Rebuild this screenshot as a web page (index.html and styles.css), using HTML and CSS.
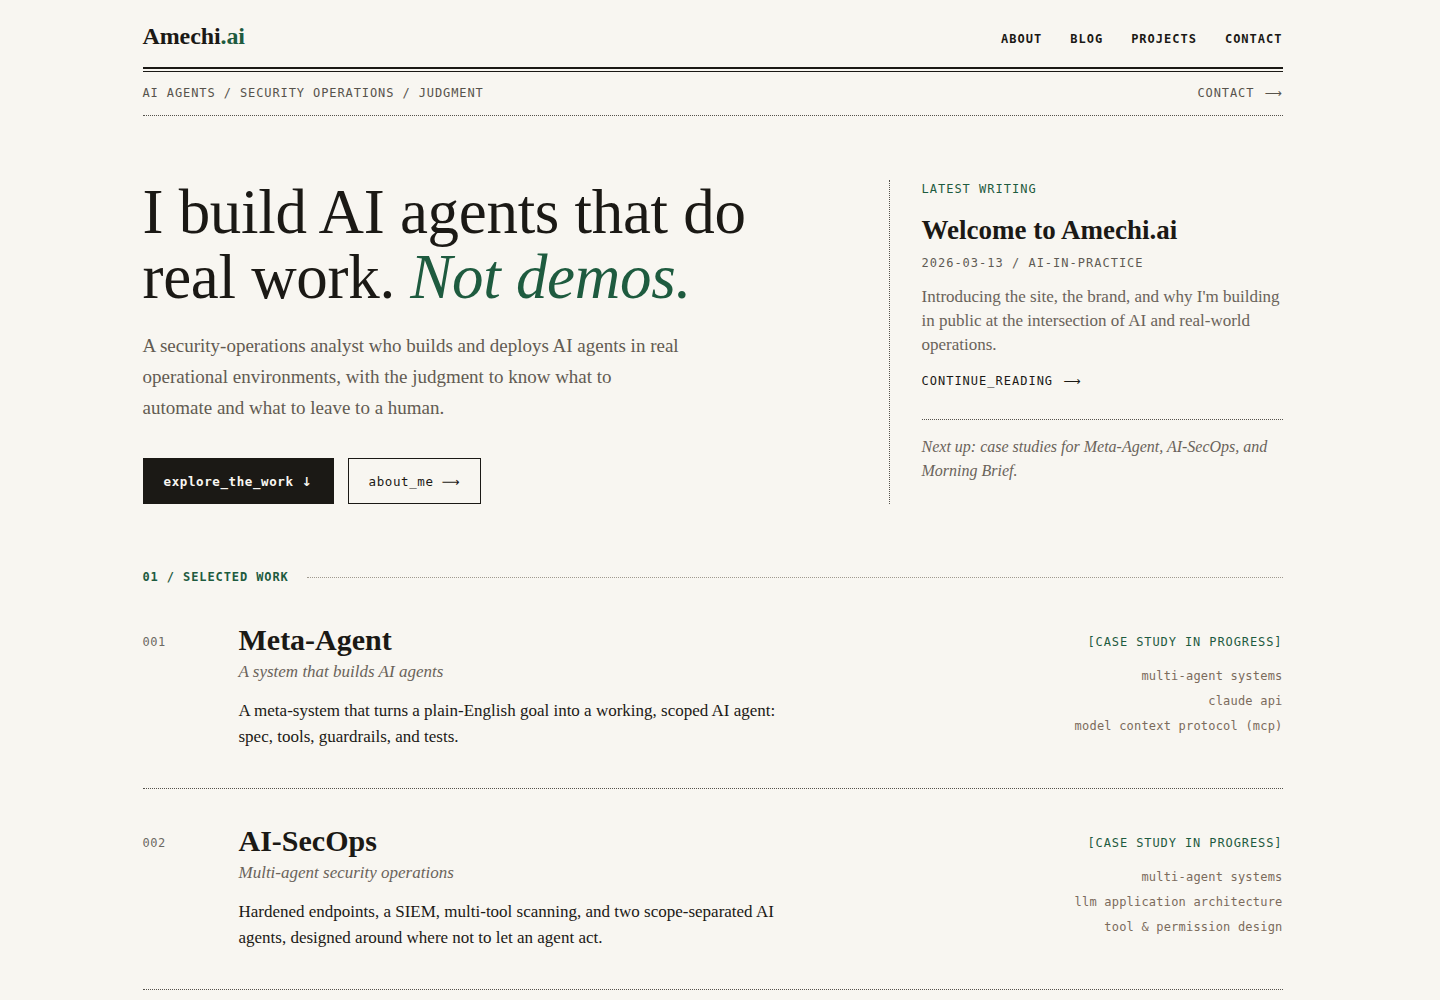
FILE: index.html
```html
<!DOCTYPE html>
<html lang="en">
<head>
<meta charset="utf-8">
<title>Amechi.ai</title>
<link rel="stylesheet" href="styles.css">
</head>
<body>
<div class="page">
  <header class="masthead">
    <a class="logo" href="#">Amechi<span class="logo-ai">.ai</span></a>
    <nav class="nav">
      <a href="#">ABOUT</a>
      <a href="#">BLOG</a>
      <a href="#">PROJECTS</a>
      <a href="#">CONTACT</a>
    </nav>
  </header>
  <div class="rule-double"></div>
  <div class="subbar">
    <span class="crumbs">AI AGENTS / SECURITY OPERATIONS / JUDGMENT</span>
    <a class="subbar-link" href="#">CONTACT <span class="arrow">&#10230;</span></a>
  </div>

  <section class="hero">
    <div class="hero-main">
      <h1 class="hero-title">I build AI agents that do real work. <em class="accent">Not demos.</em></h1>
      <p class="hero-lede">A security-operations analyst who builds and deploys AI agents in real operational environments, with the judgment to know what to automate and what to leave to a human.</p>
      <div class="hero-actions">
        <a class="btn btn-dark" href="#">explore_the_work <span class="btn-arrow">&darr;</span></a>
        <a class="btn btn-outline" href="#">about_me <span class="btn-arrow">&#10230;</span></a>
      </div>
    </div>
    <aside class="hero-side">
      <div class="eyebrow">LATEST WRITING</div>
      <h2 class="post-title">Welcome to Amechi.ai</h2>
      <div class="post-meta">2026-03-13 / AI-IN-PRACTICE</div>
      <p class="post-excerpt">Introducing the site, the brand, and why I'm building in public at the intersection of AI and real-world operations.</p>
      <a class="post-link" href="#">CONTINUE_READING <span class="arrow">&#10230;</span></a>
      <p class="post-next">Next up: case studies for Meta-Agent, AI-SecOps, and Morning Brief.</p>
    </aside>
  </section>

  <section class="work">
    <div class="section-head">
      <span class="section-label">01 / SELECTED WORK</span>
      <span class="section-line"></span>
    </div>

    <article class="project">
      <div class="project-num">001</div>
      <div class="project-body">
        <h3 class="project-title">Meta-Agent</h3>
        <p class="project-sub">A system that builds AI agents</p>
        <p class="project-desc">A meta-system that turns a plain-English goal into a working, scoped AI agent: spec, tools, guardrails, and tests.</p>
      </div>
      <div class="project-meta">
        <div class="status">[CASE STUDY IN PROGRESS]</div>
        <ul class="tags">
          <li>multi-agent systems</li>
          <li>claude api</li>
          <li>model context protocol (mcp)</li>
        </ul>
      </div>
    </article>

    <article class="project">
      <div class="project-num">002</div>
      <div class="project-body">
        <h3 class="project-title">AI-SecOps</h3>
        <p class="project-sub">Multi-agent security operations</p>
        <p class="project-desc">Hardened endpoints, a SIEM, multi-tool scanning, and two scope-separated AI agents, designed around where not to let an agent act.</p>
      </div>
      <div class="project-meta">
        <div class="status">[CASE STUDY IN PROGRESS]</div>
        <ul class="tags">
          <li>multi-agent systems</li>
          <li>llm application architecture</li>
          <li>tool &amp; permission design</li>
        </ul>
      </div>
    </article>

    <article class="project">
      <div class="project-num">003</div>
      <div class="project-body">
        <h3 class="project-title">Morning Brief</h3>
        <p class="project-sub">A daily intelligence digest</p>
        <p class="project-desc">An agent that gathers, filters, and summarizes the signals that matter each morning, with a human deciding what happens next.</p>
      </div>
      <div class="project-meta">
        <div class="status">[CASE STUDY IN PROGRESS]</div>
        <ul class="tags">
          <li>agent orchestration</li>
          <li>summarization</li>
          <li>scheduled workflows</li>
        </ul>
      </div>
    </article>
  </section>

  <section class="about">
    <div class="section-head">
      <span class="section-label">02 / APPROACH</span>
      <span class="section-line"></span>
    </div>
    <div class="about-grid">
      <div class="about-item">
        <div class="about-num">A</div>
        <h3 class="about-title">Scope before autonomy</h3>
        <p class="about-text">Every agent starts with a clear boundary: what it may touch, what it may not, and who reviews its work.</p>
      </div>
      <div class="about-item">
        <div class="about-num">B</div>
        <h3 class="about-title">Operations first</h3>
        <p class="about-text">Built and tested in real environments, where failure modes are concrete and the cost of a mistake is known.</p>
      </div>
      <div class="about-item">
        <div class="about-num">C</div>
        <h3 class="about-title">Humans in the loop</h3>
        <p class="about-text">Judgment about what to automate matters more than the automation itself.</p>
      </div>
    </div>
  </section>

  <footer class="footer">
    <span class="footer-brand">Amechi<span class="logo-ai">.ai</span></span>
    <span class="footer-note">&copy; 2026 / BUILT IN PUBLIC</span>
  </footer>
</div>
</body>
</html>
```

FILE: styles.css
```css
* { box-sizing: border-box; }

html, body {
  margin: 0;
  padding: 0;
  background: #f8f6f1;
  color: #1b1915;
}

body {
  font-family: "Liberation Serif", "DejaVu Serif", serif;
  padding-right: 15px;
}

a { color: inherit; text-decoration: none; }

.page {
  width: 1140px;
  margin: 0 auto;
}

/* masthead */
.masthead {
  display: flex;
  justify-content: space-between;
  align-items: flex-end;
  height: 67px;
  padding-bottom: 21px;
}

.logo {
  font-family: "Liberation Serif", serif;
  font-weight: 700;
  font-size: 24px;
  letter-spacing: -0.1px;
  line-height: 1;
  color: #1b1915;
  margin-bottom: -2px;
}

.logo-ai { color: #1e5b3f; }

.nav {
  display: flex;
  gap: 28px;
  font-family: "DejaVu Sans Mono", monospace;
  font-size: 12px;
  letter-spacing: 1px;
  font-weight: 700;
  line-height: 1;
  margin-bottom: 1px;
}

.nav a { color: #1b1915; }

.rule-double {
  height: 5px;
  border-top: 2px solid #1b1915;
  border-bottom: 1.5px solid #1b1915;
}

.subbar {
  display: flex;
  justify-content: space-between;
  align-items: center;
  height: 44px;
  border-bottom: 1px dotted #55524c;
  font-family: "DejaVu Sans Mono", monospace;
  font-size: 12px;
  letter-spacing: 0.9px;
  color: #57534c;
  padding-bottom: 2px;
}

.subbar-link { color: #57534c; }

.arrow {
  font-family: "DejaVu Sans", sans-serif;
  margin-left: 2px;
}

/* hero */
.hero {
  display: grid;
  grid-template-columns: 1fr 394px;
  margin-top: 64px;
}

.hero-main {
  padding-right: 60px;
}

.hero-title {
  font-family: "Liberation Serif", serif;
  font-weight: 400;
  font-size: 63px;
  line-height: 65px;
  letter-spacing: -0.3px;
  margin: 0;
  max-width: 660px;
  color: #1b1915;
}

.accent {
  color: #1e5b3f;
  font-style: italic;
}

.hero-lede {
  margin: 20px 0 0;
  width: 539px;
  font-size: 19px;
  line-height: 31px;
  color: #625b52;
}

.hero-actions {
  display: flex;
  gap: 14px;
  margin-top: 35px;
}

.btn {
  display: inline-flex;
  align-items: center;
  height: 46px;
  padding: 0 20px;
  font-family: "DejaVu Sans Mono", monospace;
  font-size: 12.5px;
  letter-spacing: 0.6px;
  border: 1px solid #1b1915;
}

.btn-dark {
  background: #1b1915;
  color: #f8f6f1;
  font-weight: 700;
}

.btn-outline {
  background: transparent;
  color: #1b1915;
}

.btn-arrow {
  font-family: "DejaVu Sans", sans-serif;
  margin-left: 8px;
}

.hero-side {
  border-left: 1px dotted #55524c;
  padding-left: 32px;
  padding-bottom: 20px;
}

.eyebrow {
  font-family: "DejaVu Sans Mono", monospace;
  font-size: 12px;
  letter-spacing: 1px;
  color: #1e5b3f;
  margin-top: 2px;
}

.post-title {
  font-family: "Liberation Serif", serif;
  font-weight: 700;
  font-size: 27px;
  line-height: 32px;
  margin: 18px 0 0;
  color: #1b1915;
}

.post-meta {
  font-family: "DejaVu Sans Mono", monospace;
  font-size: 12px;
  letter-spacing: 1px;
  color: #5f5b54;
  margin-top: 10px;
}

.post-excerpt {
  margin: 15px 0 0;
  font-size: 17px;
  line-height: 24px;
  color: #6a635a;
}

.post-link {
  display: block;
  font-family: "DejaVu Sans Mono", monospace;
  font-size: 12px;
  letter-spacing: 1px;
  color: #1b1915;
  margin-top: 17px;
  padding-bottom: 31px;
  border-bottom: 1px dotted #55524c;
}

.post-next {
  margin: 15px 0 0;
  font-style: italic;
  font-size: 16px;
  line-height: 24px;
  color: #6a635a;
}

/* work */
.work { margin-top: 66px; }

.section-head {
  display: flex;
  align-items: center;
  gap: 18px;
}

.section-label {
  font-family: "DejaVu Sans Mono", monospace;
  font-size: 12px;
  letter-spacing: 0.9px;
  color: #1e5b3f;
  font-weight: 700;
}

.section-line {
  flex: 1;
  border-top: 1px dotted #a09a90;
}

.project {
  display: grid;
  grid-template-columns: 96px 1fr 300px;
  padding: 39px 0 38px;
  border-bottom: 1px dotted #55524c;
}

.project + .project { padding-top: 35px; }

.project-num {
  font-family: "DejaVu Sans Mono", monospace;
  font-size: 12px;
  letter-spacing: 0.5px;
  color: #6d6a64;
  padding-top: 12px;
}

.project-title {
  font-family: "Liberation Serif", serif;
  font-weight: 700;
  font-size: 30px;
  line-height: 34px;
  margin: 0;
  color: #1b1915;
}

.project-sub {
  margin: 2px 0 0;
  font-style: italic;
  font-size: 17px;
  line-height: 26px;
  color: #6a635a;
}

.project-desc {
  margin: 13px 0 0;
  width: 550px;
  font-size: 17px;
  line-height: 26px;
  color: #1b1915;
}

.project-meta {
  text-align: right;
  padding-top: 12px;
}

.status {
  font-family: "DejaVu Sans Mono", monospace;
  font-size: 12px;
  letter-spacing: 0.9px;
  color: #1e5b3f;
}

.tags {
  list-style: none;
  margin: 15px 0 0;
  padding: 0;
  font-family: "DejaVu Sans Mono", monospace;
  font-size: 12px;
  letter-spacing: 0.2px;
  line-height: 25px;
  color: #7b6b5c;
}

/* about */
.about { margin-top: 90px; }

.about-grid {
  display: grid;
  grid-template-columns: repeat(3, 1fr);
  gap: 40px;
  margin-top: 44px;
}

.about-num {
  font-family: "DejaVu Sans Mono", monospace;
  font-size: 12px;
  color: #6d6a64;
}

.about-title {
  font-family: "Liberation Serif", serif;
  font-size: 24px;
  font-weight: 700;
  margin: 12px 0 0;
}

.about-text {
  margin: 10px 0 0;
  font-size: 17px;
  line-height: 26px;
  color: #625b52;
}

.footer {
  display: flex;
  justify-content: space-between;
  align-items: center;
  margin-top: 120px;
  padding: 28px 0 60px;
  border-top: 1px solid #1b1915;
}

.footer-brand {
  font-weight: 700;
  font-size: 20px;
}

.footer-note {
  font-family: "DejaVu Sans Mono", monospace;
  font-size: 12px;
  letter-spacing: 1px;
  color: #5f5b54;
}
```
